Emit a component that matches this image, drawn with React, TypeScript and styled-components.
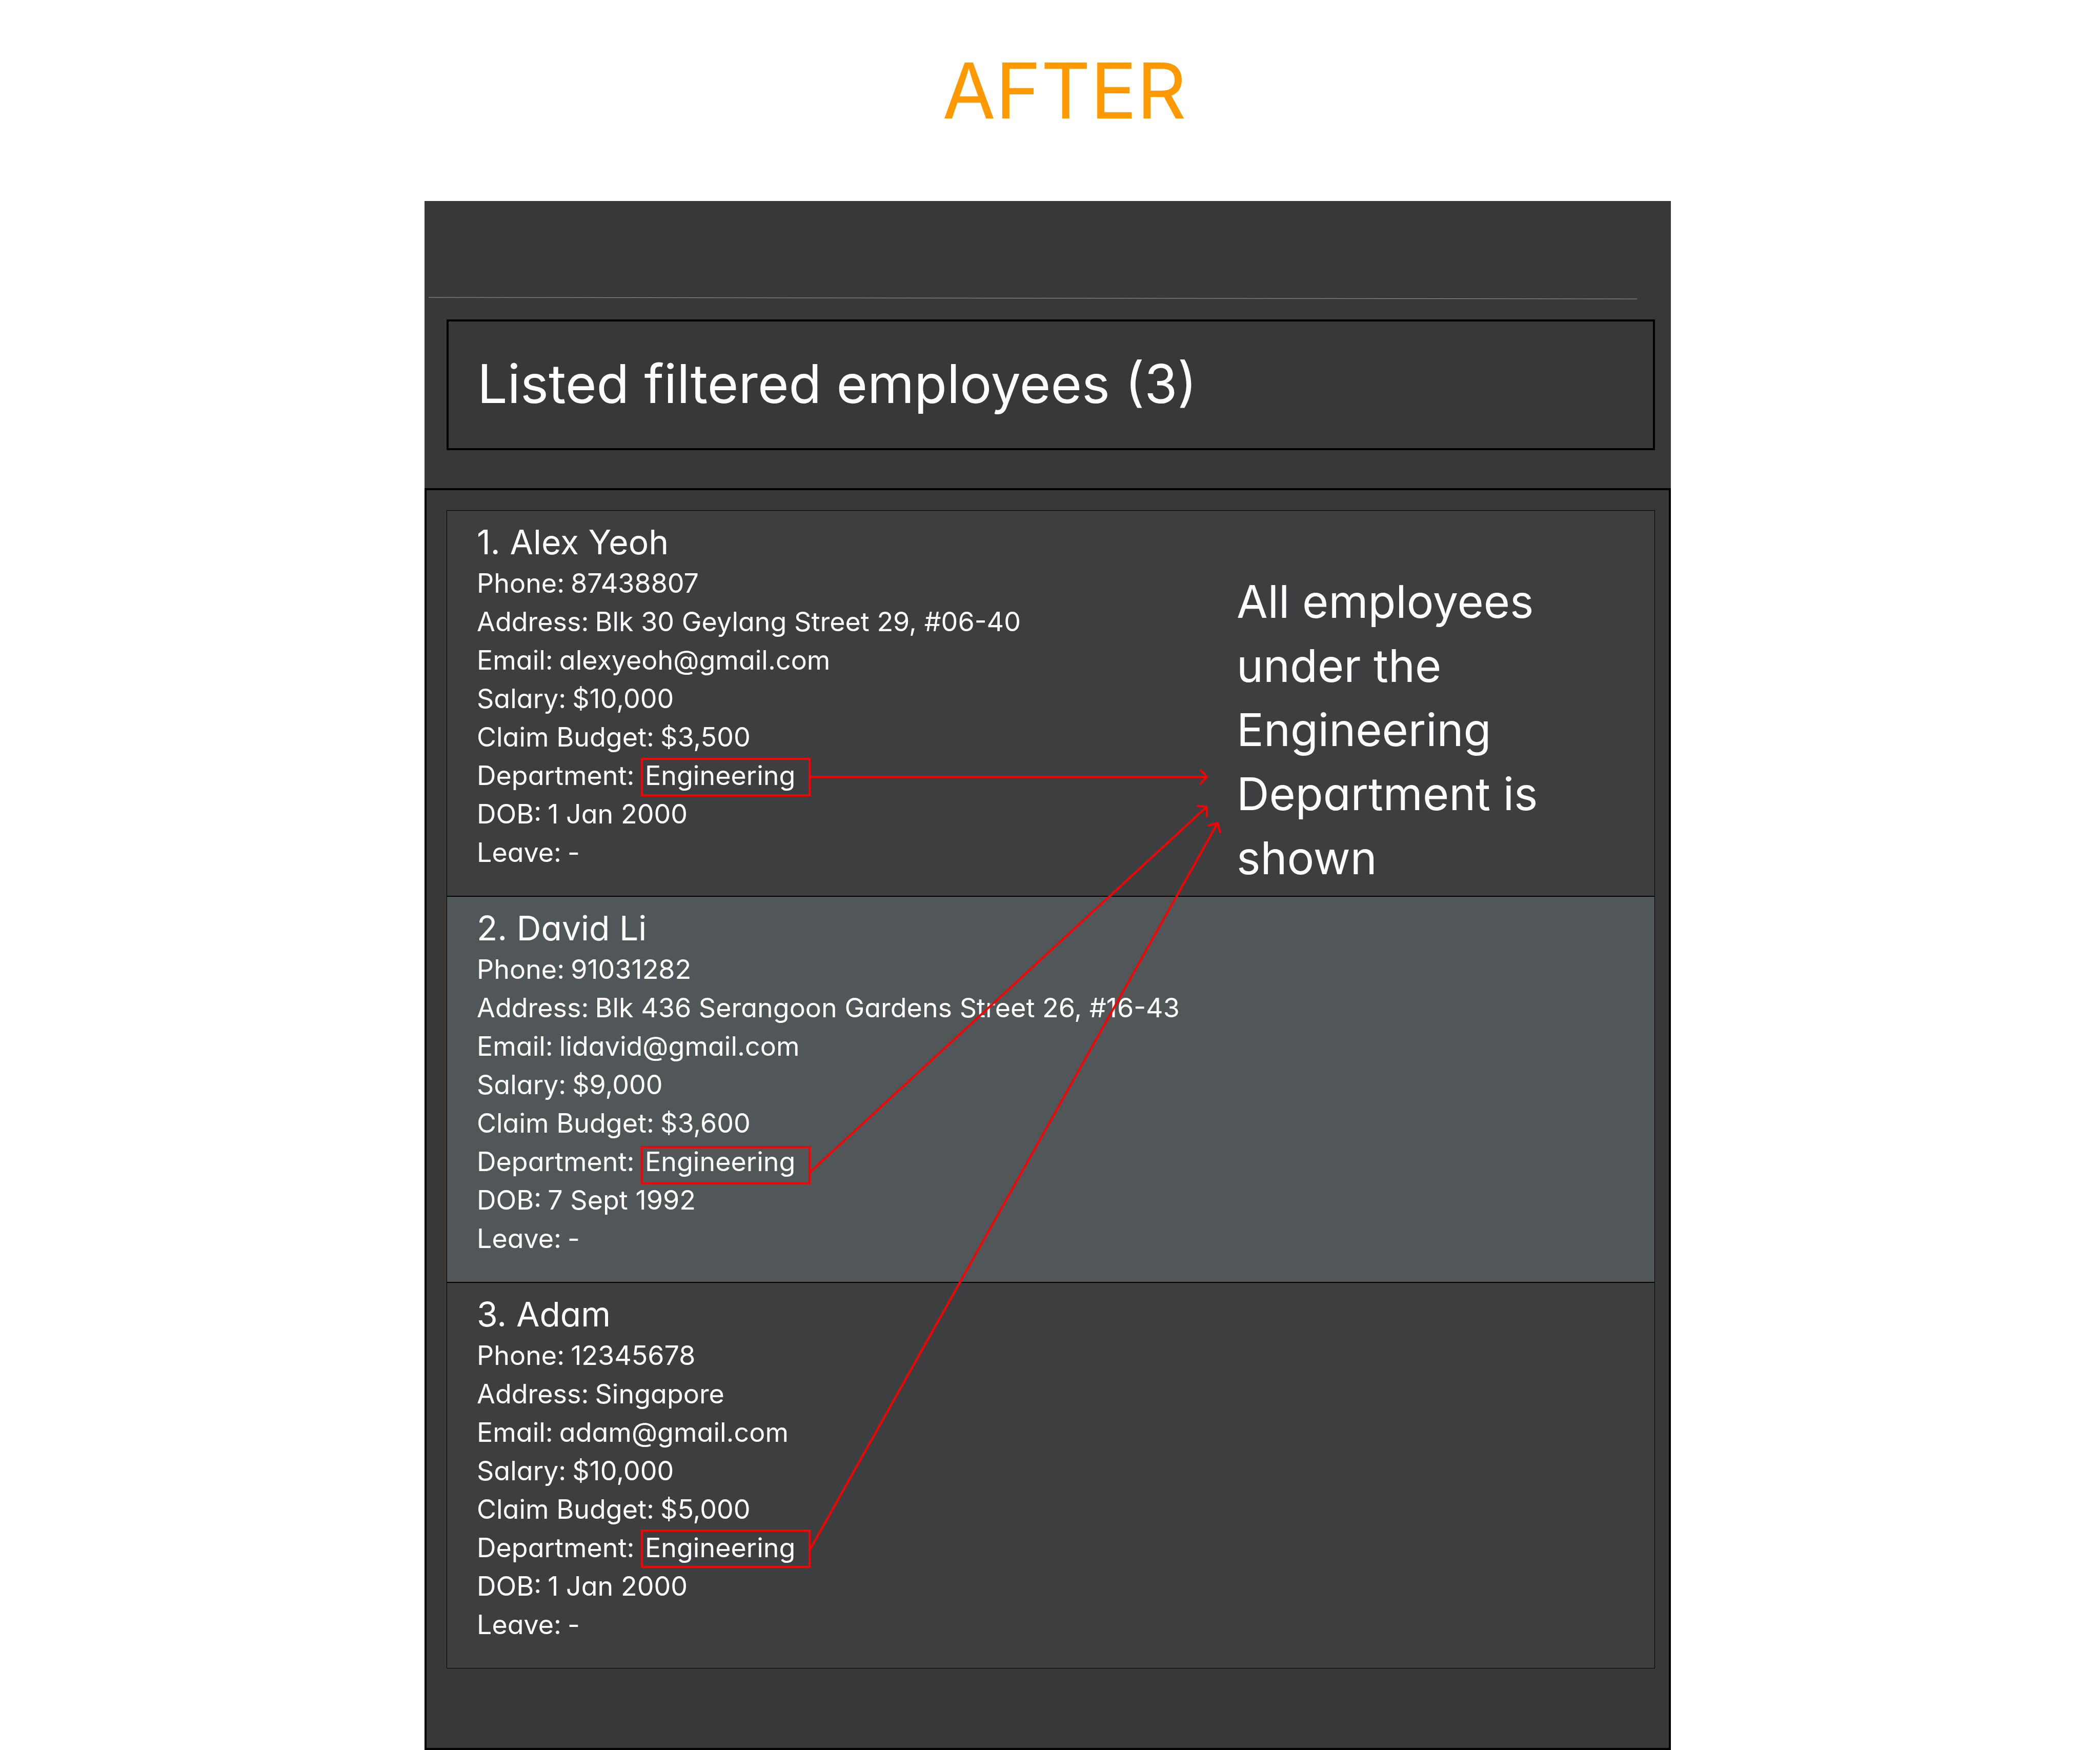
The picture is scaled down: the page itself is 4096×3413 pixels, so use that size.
import React from "react";
import styled, { createGlobalStyle } from "styled-components";

const GlobalStyle = createGlobalStyle`
  *, *::before, *::after {
    box-sizing: border-box;
  }

  body {
    margin: 0;
    background: #ffffff;
    color: #ffffff;
    font-family: Inter, "Open Sans", "Liberation Sans", sans-serif;
    /* Single-storey "a" */
    font-feature-settings: "cv11" 1;
  }
`;

const Page = styled.main`
  display: flex;
  flex-direction: column;
`;

const Title = styled.h1`
  margin: 0;
  padding: 77px 0 115px 56px;
  color: #ff9900;
  font-size: 150px;
  font-weight: 400;
  line-height: 200px;
  text-align: center;
`;

const Panel = styled.section`
  display: flex;
  flex-direction: column;
  margin: 0 837px 0 828px;
  background: #383838;
`;

const CommandArea = styled.div`
  padding: 187px 66px 0 8px;
`;

const Rule = styled.svg`
  display: block;
  width: 100%;
  height: 5px;
`;

const StatusBox = styled.div`
  margin: 39px 31px 74px 43px;
  padding: 46px 56px 51px;
  border: 4px solid #000000;
`;

const StatusText = styled.h2`
  margin: 0;
  font-size: 104px;
  font-weight: 400;
  line-height: 150px;
`;

const ListPane = styled.div`
  position: relative;
  padding: 39px 27px 155px 39px;
  border: 4px solid #000000;
`;

const EmployeeList = styled.ol`
  margin: 0;
  padding: 0;
  list-style: none;
`;

const Card = styled.li<{ $alternate: boolean }>`
  display: flex;
  align-items: flex-start;
  border: 1px solid #000000;
  background: ${(p) => (p.$alternate ? "#515658" : "#3c3e3f")};
`;

const Details = styled.div`
  flex: 1;
  padding: 18px 0 47px 58px;
`;

const Name = styled.h3`
  margin: 0;
  font-size: 66px;
  font-weight: 400;
  line-height: 86px;
`;

const Fields = styled.dl`
  margin: 0;
  font-size: 52px;
  line-height: 75px;
`;

const Field = styled.div`
  display: flex;
  gap: 12px;
`;

const Label = styled.dt<{ $wide: boolean }>`
  min-width: ${(p) => (p.$wide ? "316px" : "0")};
`;

const Value = styled.dd`
  margin: 0;
`;

const Note = styled.p`
  flex: none;
  width: 815px;
  margin: 0;
  padding: 115px 135px 0 0;
  font-size: 88px;
  line-height: 125px;
`;

const Annotations = styled.svg`
  position: absolute;
  inset: 0;
  width: 100%;
  height: 100%;
  fill: none;
  stroke: #ff0000;
  stroke-width: 4px;
  stroke-linecap: round;
  stroke-linejoin: round;
  pointer-events: none;
`;

interface Employee {
  name: string;
  fields: [string, string][];
  note?: string;
}

const employees: Employee[] = [
  {
    name: "Alex Yeoh",
    fields: [
      ["Phone", "87438807"],
      ["Address", "Blk 30 Geylang Street 29, #06-40"],
      ["Email", "alexyeoh@gmail.com"],
      ["Salary", "$10,000"],
      ["Claim Budget", "$3,500"],
      ["Department", "Engineering"],
      ["DOB", "1 Jan 2000"],
      ["Leave", "-"],
    ],
    note: "All employees under the Engineering Department is shown",
  },
  {
    name: "David Li",
    fields: [
      ["Phone", "91031282"],
      ["Address", "Blk 436 Serangoon Gardens Street 26, #16-43"],
      ["Email", "lidavid@gmail.com"],
      ["Salary", "$9,000"],
      ["Claim Budget", "$3,600"],
      ["Department", "Engineering"],
      ["DOB", "7 Sept 1992"],
      ["Leave", "-"],
    ],
  },
  {
    name: "Adam",
    fields: [
      ["Phone", "12345678"],
      ["Address", "Singapore"],
      ["Email", "adam@gmail.com"],
      ["Salary", "$10,000"],
      ["Claim Budget", "$5,000"],
      ["Department", "Engineering"],
      ["DOB", "1 Jan 2000"],
      ["Leave", "-"],
    ],
  },
];

export default function App() {
  return (
    <>
      <GlobalStyle />
      <Page>
        <Title>AFTER</Title>
        <Panel>
          <CommandArea>
            <Rule viewBox="0 0 2357 5" preserveAspectRatio="none" aria-hidden="true">
              <line x1="0" y1="1" x2="2357" y2="4" stroke="#9c9c9c" strokeWidth="1" />
            </Rule>
          </CommandArea>
          <StatusBox>
            <StatusText>Listed filtered employees ({employees.length})</StatusText>
          </StatusBox>
          <ListPane>
            <EmployeeList>
              {employees.map((employee, index) => (
                <Card key={employee.name} $alternate={index % 2 === 1}>
                  <Details>
                    <Name>
                      {index + 1}. {employee.name}
                    </Name>
                    <Fields>
                      {employee.fields.map(([label, value]) => (
                        <Field key={label}>
                          <Label $wide={label === "Department"}>{label}:</Label>
                          <Value>{value}</Value>
                        </Field>
                      ))}
                    </Fields>
                  </Details>
                  {employee.note && <Note>{employee.note}</Note>}
                </Card>
              ))}
            </EmployeeList>
            <Annotations aria-hidden="true">
              {/* Boxes round each department value */}
              <g strokeLinejoin="miter">
                <rect x="420" y="524" width="327" height="71" />
                <rect x="420" y="1281" width="327" height="71" />
                <rect x="420" y="2029" width="327" height="71" />
              </g>
              {/* Arrows from the boxes to the note */}
              <path d="M749 559H1522M1510 546L1522 559L1510 572" />
              <path d="M749 1329L1522 617M1504 616L1522 617L1522 636" />
              <path d="M749 2064L1543 649M1525 654L1543 649L1548 667" />
            </Annotations>
          </ListPane>
        </Panel>
      </Page>
    </>
  );
}
